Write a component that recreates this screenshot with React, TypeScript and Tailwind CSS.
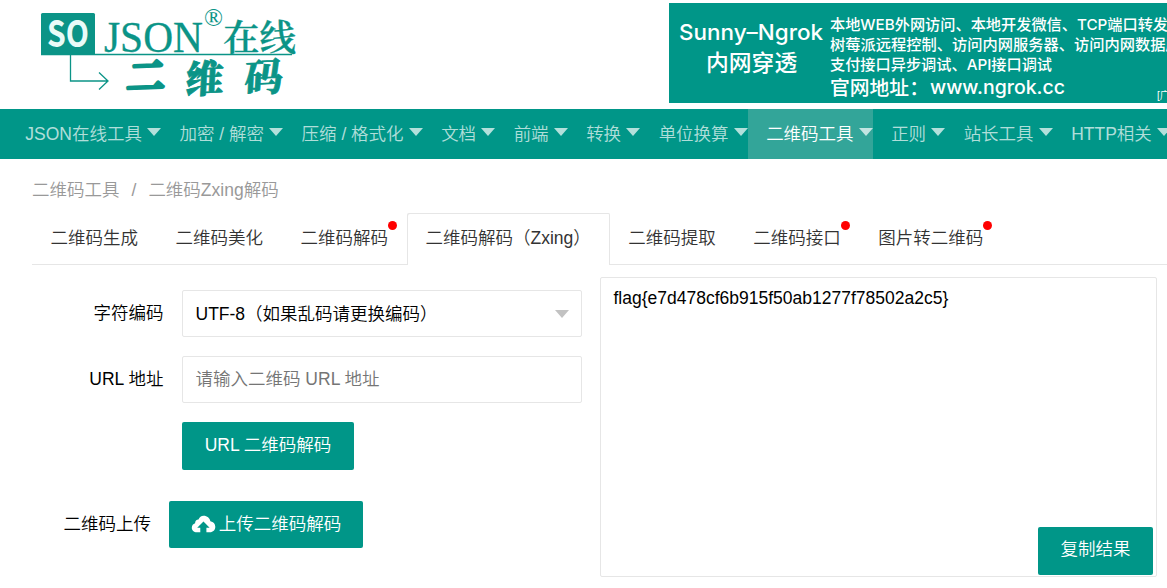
import React, { useState } from 'react';
import clsx from 'clsx';

interface NavItem {
  label: string;
  active?: boolean;
}

interface TabItem {
  label: string;
  active?: boolean;
  dot?: boolean;
}

const navItems: NavItem[] = [
  { label: 'JSON在线工具' },
  { label: '加密 / 解密' },
  { label: '压缩 / 格式化' },
  { label: '文档' },
  { label: '前端' },
  { label: '转换' },
  { label: '单位换算' },
  { label: '二维码工具', active: true },
  { label: '正则' },
  { label: '站长工具' },
  { label: 'HTTP相关' },
];

const tabs: TabItem[] = [
  { label: '二维码生成' },
  { label: '二维码美化' },
  { label: '二维码解码', dot: true },
  { label: '二维码解码（Zxing）', active: true },
  { label: '二维码提取' },
  { label: '二维码接口', dot: true },
  { label: '图片转二维码', dot: true },
];

function Logo() {
  return (
    <svg width="280" height="106" viewBox="20 0 280 106" fill="#0b9487" className="block">
      <rect x="41" y="13" width="54" height="42" rx="1.5" />
      <text x="47" y="47" fontSize="36.5" fontWeight="700" fill="#e9fbf8" textLength="42" lengthAdjust="spacingAndGlyphs" className="font-['Noto_Sans_CJK_SC',sans-serif]">SO</text>
      <text x="104" y="52" fontSize="44" textLength="99" lengthAdjust="spacingAndGlyphs" stroke="#0b9487" strokeWidth="0.3" className="font-['Liberation_Serif',serif]">JSON</text>
      <text x="204" y="25.5" fontSize="25" textLength="19" lengthAdjust="spacingAndGlyphs" className="font-['Liberation_Serif',serif]">®</text>
      <text x="223" y="51" fontSize="36" fontWeight="600" textLength="73" lengthAdjust="spacingAndGlyphs" stroke="#0b9487" strokeWidth="0.3" className="font-['Noto_Serif_CJK_SC','Noto_Sans_CJK_SC',serif]">在线</text>
      <path d="M41 54.5H292M70.5 55V81H107M99 72.5L108 81L99 89.5" fill="none" stroke="#0b9487" strokeWidth="1.3" />
      <g fontSize="38" fontWeight="900" stroke="#0b9487" strokeLinejoin="round" className="font-['Noto_Serif_CJK_SC','Noto_Sans_CJK_SC',serif]">
        <text transform="translate(126 91) rotate(-2) skewX(-8)" strokeWidth="3.5">二</text>
        <text transform="translate(185 93.5) rotate(-3) skewX(-6)" strokeWidth="0.8">维</text>
        <text transform="translate(244 92) rotate(-3) skewX(-6)" strokeWidth="0.8">码</text>
      </g>
    </svg>
  );
}

function Banner() {
  return (
    <svg width="498" height="100" viewBox="669 3 498 100" fill="#fff" className="block shrink-0 bg-[#009688]">
      <g fontWeight="500" className="font-['Inter','Noto_Sans_CJK_SC',sans-serif]">
        <text x="679" y="40" fontSize="22" textLength="144" lengthAdjust="spacingAndGlyphs">Sunny–Ngrok</text>
        <text x="706" y="71" fontSize="22.8">内网穿透</text>
        <text x="830" y="29.5" fontSize="15.2" textLength="338" lengthAdjust="spacingAndGlyphs">本地WEB外网访问、本地开发微信、TCP端口转发</text>
        <text x="830" y="49.5" fontSize="15.25">树莓派远程控制、访问内网服务器、访问内网数据库</text>
        <text x="830" y="69.5" fontSize="15.2" textLength="222" lengthAdjust="spacingAndGlyphs">支付接口异步调试、API接口调试</text>
        <text x="830" y="94.5" fontSize="19.8">官网地址：</text>
        <text x="930" y="94" fontSize="19" textLength="135" lengthAdjust="spacingAndGlyphs">www.ngrok.cc</text>
      </g>
      <text x="1157" y="98.5" fontSize="10" className="font-['Liberation_Sans','Noto_Sans_CJK_SC',sans-serif]">[广告]</text>
    </svg>
  );
}

function Caret({ className }: { className?: string }) {
  return <i className={clsx('block h-0 w-0 border-x-[7px] border-t-[8px] border-x-transparent', className)} />;
}

export default function App() {
  const [url, setUrl] = useState('');
  const [result, setResult] = useState('flag{e7d478cf6b915f50ab1277f78502a2c5}');

  return (
    <div className="h-[588px] w-[1167px] overflow-hidden bg-white font-['Liberation_Sans','Noto_Sans_CJK_SC',sans-serif] text-[17.5px] leading-[25px] font-[350] text-black">
      <header className="flex h-[109px] items-start justify-between pl-5">
        <Logo />
        <div className="pt-[3px]">
          <Banner />
        </div>
      </header>

      <nav className="flex h-[50px] overflow-hidden bg-[#009688] pl-[7px]">
        {navItems.map((item) => (
          <a
            key={item.label}
            href="#"
            className={clsx(
              'relative block shrink-0 pr-[19.25px] pl-[18.25px] leading-[50px] whitespace-nowrap',
              item.active ? 'bg-[#33a599] text-white' : 'text-white/70'
            )}
          >
            {item.label}
            <Caret className="absolute top-[19px] right-0 border-t-white/70" />
          </a>
        ))}
      </nav>

      <div className="flex h-[54px] items-center gap-3 pt-[9px] pl-8 text-[#999]">
        <a href="#">二维码工具</a>
        <span>/</span>
        <a href="#">二维码Zxing解码</a>
      </div>

      <ul className="ml-8 flex h-[52px] border-b border-[#e6e6e6] text-[#333]">
        {tabs.map((tab) => (
          <li
            key={tab.label}
            className={clsx(
              'relative h-[52px] shrink-0 pr-[19px] pl-[18.5px] leading-[50px] whitespace-nowrap',
              tab.active && 'rounded-t-[2px] bg-white shadow-[inset_1px_1px_#e6e6e6,inset_-1px_0_#e6e6e6]'
            )}
          >
            {tab.label}
            {tab.dot && <span className="absolute top-2 right-2.5 h-[9px] w-[9px] rounded-full bg-[#f00]" />}
          </li>
        ))}
      </ul>

      <div className="flex">
        <form className="flex w-[582px] flex-col pt-[25px]" onSubmit={(e) => e.preventDefault()}>
          <div className="flex h-[47px]">
            <label className="w-[163.5px] pt-[11px] text-right">字符编码</label>
            <div className="ml-[18.5px] flex flex-1 items-center justify-between rounded-[2px] border border-[#e6e6e6] pr-[12.5px] pl-[12.5px]">
              <span className="pt-px">UTF-8（如果乱码请更换编码）</span>
              <Caret className="border-t-[#c2c2c2]" />
            </div>
          </div>
          <div className="mt-[19px] flex h-[47px]">
            <label className="w-[163.5px] pt-[11px] text-right">URL 地址</label>
            <input
              value={url}
              onChange={(e) => setUrl(e.target.value)}
              placeholder="请输入二维码 URL 地址"
              className="ml-[18.5px] min-w-0 flex-1 rounded-[2px] border border-[#e6e6e6] px-[12.5px] outline-none placeholder:text-[#757575]"
            />
          </div>
          <button className="mt-[19px] ml-[182px] h-12 w-[172px] rounded-[2px] bg-[#009688] pb-0.5 font-[350] text-white">
            URL 二维码解码
          </button>
          <div className="mt-[31px] flex h-[47px]">
            <label className="w-[151px] pt-[11px] text-right">二维码上传</label>
            <button className="ml-[18px] flex w-[194px] items-center justify-center gap-[3px] rounded-[2px] bg-[#009688] pb-px font-[350] text-white">
              <svg width="25" height="18" viewBox="0 0 25 18" fill="currentColor">
                <path d="M9.3 17.3H5.8C2.8 17.3.8 15.3.8 12.7c0-2.3 1.4-3.9 3.3-4.5C4 6 5.5 4.5 7.5 4.4 8.4 2.1 10.2.7 12.6.7c3.5 0 6.3 2.3 6.8 5.6 3 .4 4.9 2.7 4.9 5.500 0 3.200-2.300 5.500-5.400 5.500h-3.500v-4.600h3.200L12.500 6.500l-6.300 6.200h3.100z" />
              </svg>
              上传二维码解码
            </button>
          </div>
        </form>

        <div className="relative mt-3 ml-[18px] h-[300px] w-[557px]">
          <textarea
            value={result}
            onChange={(e) => setResult(e.target.value)}
            className="block h-full w-full resize-none rounded-[2px] border border-[#e6e6e6] px-[12.5px] py-[7.5px] outline-none"
          />
          <button className="absolute right-1 bottom-0.5 h-12 w-[115px] rounded-[2px] bg-[#009688] pb-[3px] font-[350] text-white">
            复制结果
          </button>
        </div>
      </div>
    </div>
  );
}
